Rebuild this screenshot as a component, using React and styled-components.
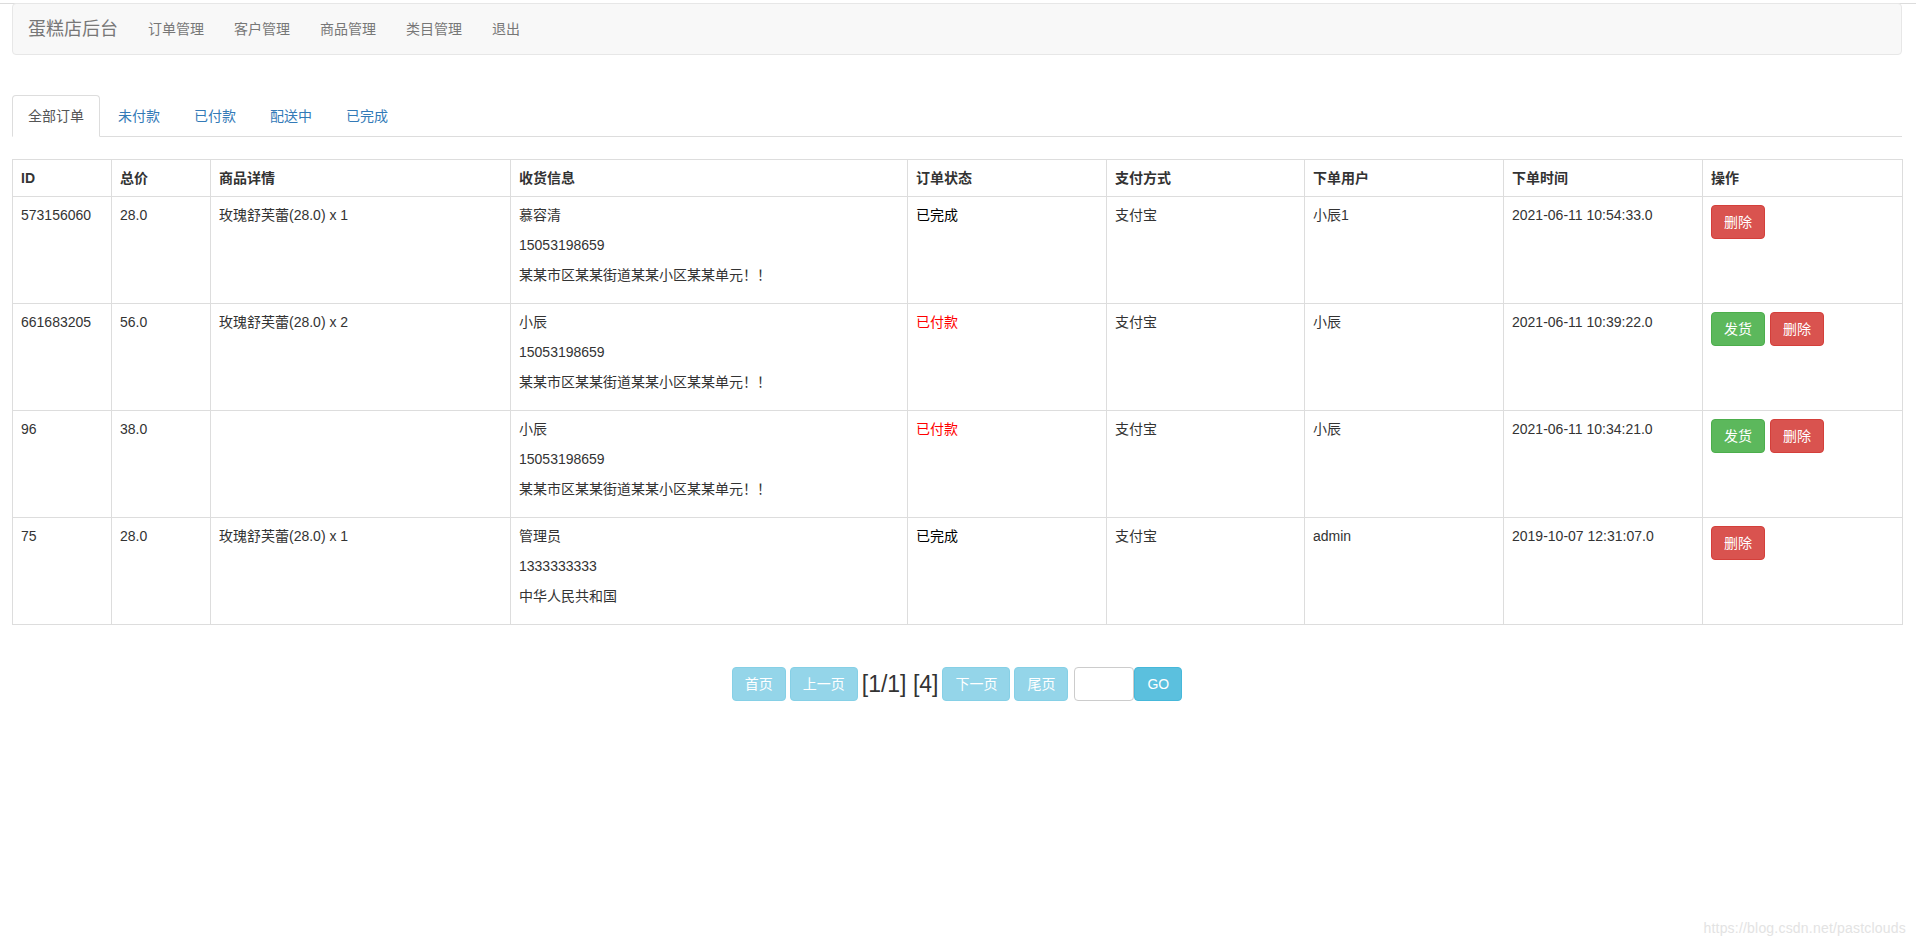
import React, { useState } from 'react';
import styled, { createGlobalStyle, css } from 'styled-components';

const GlobalStyle = createGlobalStyle`
  html, body {
    margin: 0;
    padding: 0;
    background: #fff;
  }
  body {
    font-family: "Liberation Sans", Arial, "Noto Sans CJK SC", sans-serif;
    font-size: 14px;
    line-height: 20px;
    color: #333;
  }
  * {
    box-sizing: border-box;
  }
`;

const colors = {
  link: '#337ab7',
  border: '#ddd',
  info: '#5bc0de',
  infoBorder: '#46b8da',
  success: '#5cb85c',
  successBorder: '#4cae4c',
  danger: '#d9534f',
  dangerBorder: '#d43f3a',
};

const Page = styled.div`
  width: 1916px;
  min-height: 944px;
  position: relative;
`;

const TopRule = styled.div`
  height: 1px;
  margin-top: 3px;
  background: #dcdcdc;
`;

const Container = styled.div`
  padding: 0 14px 0 12px;
`;

const Navbar = styled.nav`
  display: flex;
  align-items: center;
  height: 52px;
  margin-top: -1px;
  padding: 0 15px;
  background: #f8f8f8;
  border: 1px solid #e7e7e7;
  border-radius: 4px;
  margin-bottom: 40px;
`;

const Brand = styled.a`
  font-size: 18px;
  line-height: 20px;
  color: #777;
  margin-right: 15px;
  cursor: pointer;
`;

const NavLink = styled.a`
  padding: 0 15px;
  font-size: 14px;
  color: #777;
  cursor: pointer;

  &:hover {
    color: #333;
  }
`;

const Tabs = styled.ul`
  display: flex;
  list-style: none;
  margin: 0 0 22px;
  padding: 0;
  border-bottom: 1px solid ${colors.border};
`;

const Tab = styled.li`
  margin-right: 2px;
  margin-bottom: -1px;
  padding: 10px 15px;
  line-height: 20px;
  border: 1px solid transparent;
  border-radius: 4px 4px 0 0;
  color: ${colors.link};
  cursor: pointer;

  ${(p) => p.active && css`
    color: #555;
    background: #fff;
    border-color: ${colors.border} ${colors.border} transparent;
  `}
`;

const Table = styled.table`
  width: 100%;
  table-layout: fixed;
  border-collapse: collapse;
  border: 1px solid ${colors.border};
  margin-bottom: 42px;
`;

const Th = styled.th`
  padding: 8px;
  text-align: left;
  font-weight: bold;
  border: 1px solid ${colors.border};
  line-height: 20px;
`;

const Td = styled.td`
  padding: 8px;
  vertical-align: top;
  border: 1px solid ${colors.border};
  line-height: 20px;
`;

const Line = styled.p`
  margin: 0 0 10px;
`;

const Status = styled.span`
  color: ${(p) => (p.paid ? '#f00' : '#000')};
`;

const Actions = styled.div`
  display: flex;
  gap: 5px;
`;

const Btn = styled.button`
  display: inline-block;
  height: 34px;
  padding: 6px 12px;
  font-family: inherit;
  font-size: 14px;
  line-height: 20px;
  color: #fff;
  border-radius: 4px;
  cursor: pointer;
  background: ${(p) => p.bg};
  border: 1px solid ${(p) => p.bd};
  opacity: ${(p) => (p.disabled ? 0.65 : 1)};
`;

const Pager = styled.div`
  display: flex;
  justify-content: center;
  align-items: center;
  gap: 4px;
`;

const PageInfo = styled.span`
  font-size: 23px;
  line-height: 34px;
  color: #333;
`;

const GoGroup = styled.div`
  display: flex;
  align-items: center;
  margin-left: 2px;
`;

const PageInput = styled.input`
  width: 60px;
  height: 34px;
  padding: 6px 8px;
  border: 1px solid #ccc;
  border-radius: 4px;
  font-size: 14px;
  outline: none;
`;

const Watermark = styled.div`
  position: absolute;
  right: 10px;
  bottom: 9px;
  font-size: 14px;
  color: #e3e3e3;
  letter-spacing: 0.2px;
`;

const columns = [
  { key: 'id', title: 'ID', width: 99 },
  { key: 'total', title: '总价', width: 99 },
  { key: 'goods', title: '商品详情', width: 300 },
  { key: 'receiver', title: '收货信息', width: 397 },
  { key: 'status', title: '订单状态', width: 199 },
  { key: 'pay', title: '支付方式', width: 198 },
  { key: 'user', title: '下单用户', width: 199 },
  { key: 'time', title: '下单时间', width: 199 },
  { key: 'op', title: '操作', width: 200 },
];

const orders = [
  {
    id: '573156060', total: '28.0', goods: '玫瑰舒芙蕾(28.0) x 1',
    receiver: ['慕容清', '15053198659', '某某市区某某街道某某小区某某单元！！'],
    status: 3, pay: '支付宝', user: '小辰1', time: '2021-06-11 10:54:33.0',
  },
  {
    id: '661683205', total: '56.0', goods: '玫瑰舒芙蕾(28.0) x 2',
    receiver: ['小辰', '15053198659', '某某市区某某街道某某小区某某单元！！'],
    status: 2, pay: '支付宝', user: '小辰', time: '2021-06-11 10:39:22.0',
  },
  {
    id: '96', total: '38.0', goods: '',
    receiver: ['小辰', '15053198659', '某某市区某某街道某某小区某某单元！！'],
    status: 2, pay: '支付宝', user: '小辰', time: '2021-06-11 10:34:21.0',
  },
  {
    id: '75', total: '28.0', goods: '玫瑰舒芙蕾(28.0) x 1',
    receiver: ['管理员', '1333333333', '中华人民共和国'],
    status: 3, pay: '支付宝', user: 'admin', time: '2019-10-07 12:31:07.0',
  },
];

const tabs = ['全部订单', '未付款', '已付款', '配送中', '已完成'];
const navItems = ['订单管理', '客户管理', '商品管理', '类目管理', '退出'];

const App = () => {
  const [activeTab, setActiveTab] = useState(0);
  const [page, setPage] = useState('');

  return (
    <Page>
      <GlobalStyle />
      <TopRule />
      <Container>
        <Navbar>
          <Brand>蛋糕店后台</Brand>
          {navItems.map((n) => <NavLink key={n}>{n}</NavLink>)}
        </Navbar>

        <Tabs>
          {tabs.map((t, i) => (
            <Tab key={t} active={i === activeTab} onClick={() => setActiveTab(i)}>{t}</Tab>
          ))}
        </Tabs>

        <Table>
          <colgroup>
            {columns.map((c) => <col key={c.key} style={{ width: c.width }} />)}
          </colgroup>
          <thead>
            <tr>
              {columns.map((c) => <Th key={c.key}>{c.title}</Th>)}
            </tr>
          </thead>
          <tbody>
            {orders.map((o) => (
              <tr key={o.id}>
                <Td>{o.id}</Td>
                <Td>{o.total}</Td>
                <Td>{o.goods}</Td>
                <Td>
                  {o.receiver.map((r, i) => <Line key={i}>{r}</Line>)}
                </Td>
                <Td>
                  <Status paid={o.status === 2}>{o.status === 2 ? '已付款' : '已完成'}</Status>
                </Td>
                <Td>{o.pay}</Td>
                <Td>{o.user}</Td>
                <Td>{o.time}</Td>
                <Td>
                  <Actions>
                    {o.status === 2 && (
                      <Btn bg={colors.success} bd={colors.successBorder}>发货</Btn>
                    )}
                    <Btn bg={colors.danger} bd={colors.dangerBorder}>删除</Btn>
                  </Actions>
                </Td>
              </tr>
            ))}
          </tbody>
        </Table>

        <Pager>
          <Btn disabled bg={colors.info} bd={colors.infoBorder}>首页</Btn>
          <Btn disabled bg={colors.info} bd={colors.infoBorder}>上一页</Btn>
          <PageInfo>[1/1] [4]</PageInfo>
          <Btn disabled bg={colors.info} bd={colors.infoBorder}>下一页</Btn>
          <Btn disabled bg={colors.info} bd={colors.infoBorder}>尾页</Btn>
          <GoGroup>
            <PageInput value={page} onChange={(e) => setPage(e.currentTarget.value)} />
            <Btn bg={colors.info} bd={colors.infoBorder}>GO</Btn>
          </GoGroup>
        </Pager>
      </Container>
      <Watermark>https://blog.csdn.net/pastclouds</Watermark>
    </Page>
  );
};

export default App;
